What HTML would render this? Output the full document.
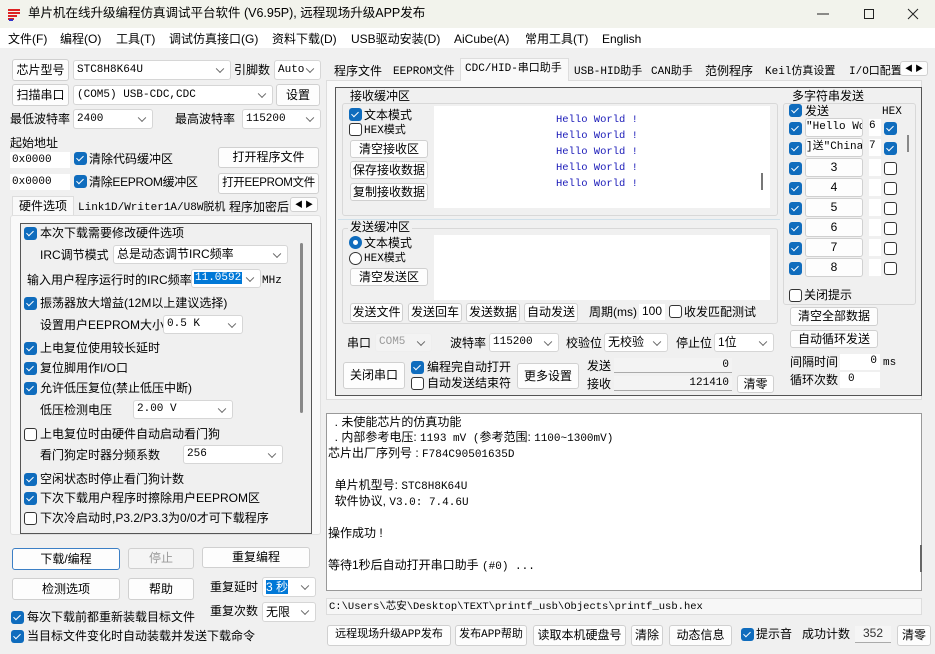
<!DOCTYPE html>
<html><head><meta charset="utf-8"><style>
*{box-sizing:border-box;margin:0;padding:0}
body{width:935px;height:654px;overflow:hidden;background:#f0f0f0;font:12px "Liberation Sans","Noto Sans CJK SC",sans-serif;color:#000;position:relative}
.a{position:absolute;white-space:nowrap;line-height:14px}
.b{position:absolute;background:#fdfdfd;border:1px solid #d0d0d0;border-radius:3px;text-align:center;white-space:nowrap;font-size:12px}
.s{position:absolute;background:#fff;border:1px solid #d6d6d6;border-radius:3px;padding-left:3px;white-space:nowrap;overflow:hidden}
.s::after{content:"";position:absolute;right:7px;top:50%;width:5px;height:5px;border-right:1px solid #666;border-bottom:1px solid #666;transform:translateY(-70%) rotate(45deg)}
.c{position:absolute;width:13px;height:13px;background:#0f6cbd;border-radius:3px}
.c::after{content:"";position:absolute;left:4px;top:2px;width:3px;height:6px;border-right:1.5px solid #fff;border-bottom:1.5px solid #fff;transform:rotate(45deg)}
.u{position:absolute;width:13px;height:13px;background:#fff;border:1px solid #333;border-radius:3px}
.m{font-family:"Liberation Mono","Noto Sans CJK SC",monospace;font-size:11px}
.w{position:absolute;background:#fff}
.g{position:absolute;border:1px solid #d8d8d8;border-radius:3px}
.l{position:absolute;left:328px;white-space:nowrap;line-height:14px}
</style></head><body>
<!-- title -->
<div style="position:absolute;left:0;top:0;width:935px;height:28px;background:#f2f3ec"></div>
<svg class="a" style="left:6px;top:6px" width="16" height="16"><path d="M2 4h12M2 7h12M2 10h9M2 13h6" stroke="#d22" stroke-width="2"/><path d="M3 14h4" stroke="#33c" stroke-width="2"/></svg>
<div class="a" style="left:28px;top:6px;font-size:12.5px">单片机在线升级编程仿真调试平台软件 (V6.95P), 远程现场升级APP发布</div>
<svg class="a" style="left:815px;top:6px" width="110" height="16"><path d="M2 8h12" stroke="#222"/><rect x="49.5" y="3.5" width="9" height="9" fill="none" stroke="#222"/><path d="M93 3l10 10M103 3l-10 10" stroke="#222"/></svg>
<!-- menu -->
<div style="position:absolute;left:0;top:28px;width:935px;height:20px;background:#fff"></div>
<div class="a" style="left:8px;top:32px">文件(F)</div><div class="a" style="left:60px;top:32px">编程(O)</div><div class="a" style="left:116px;top:32px">工具(T)</div><div class="a" style="left:169px;top:32px">调试仿真接口(G)</div><div class="a" style="left:272px;top:32px">资料下载(D)</div><div class="a" style="left:351px;top:32px">USB驱动安装(D)</div><div class="a" style="left:454px;top:32px">AiCube(A)</div><div class="a" style="left:525px;top:32px">常用工具(T)</div><div class="a" style="left:602px;top:32px">English</div>
<!-- left top -->
<div class="b" style="left:12px;top:59px;width:57px;height:22px;line-height:20px">芯片型号</div>
<div class="s m" style="left:73px;top:60px;width:158px;height:20px;line-height:18px">STC8H8K64U</div>
<div class="a" style="left:234px;top:63px">引脚数</div>
<div class="s m" style="left:274px;top:60px;width:47px;height:20px;line-height:18px">Auto</div>
<div class="b" style="left:12px;top:84px;width:57px;height:22px;line-height:20px">扫描串口</div>
<div class="s m" style="left:73px;top:85px;width:200px;height:20px;line-height:18px">(COM5) USB-CDC,CDC</div>
<div class="b" style="left:276px;top:84px;width:44px;height:22px;line-height:20px">设置</div>
<div class="a" style="left:10px;top:112px">最低波特率</div>
<div class="s m" style="left:73px;top:109px;width:80px;height:20px;line-height:18px">2400</div>
<div class="a" style="left:175px;top:112px">最高波特率</div>
<div class="s m" style="left:242px;top:109px;width:79px;height:20px;line-height:18px">115200</div>
<div class="a" style="left:10px;top:136px">起始地址</div>
<div class="w m a" style="left:10px;top:152px;width:60px;height:16px;padding-left:2px;line-height:16px">0x0000</div>
<div class="c" style="left:74px;top:152px"></div><div class="a" style="left:89px;top:152px">清除代码缓冲区</div>
<div class="b" style="left:218px;top:147px;width:101px;height:21px;line-height:19px">打开程序文件</div>
<div class="w m a" style="left:10px;top:174px;width:60px;height:16px;padding-left:2px;line-height:16px">0x0000</div>
<div class="c" style="left:74px;top:175px"></div><div class="a" style="left:89px;top:175px;letter-spacing:-0.3px">清除EEPROM缓冲区</div>
<div class="b" style="left:218px;top:173px;width:101px;height:21px;line-height:19px;font-size:11.5px;letter-spacing:-0.3px">打开EEPROM文件</div>
<!-- left tabs -->
<div style="position:absolute;left:12px;top:196px;width:62px;height:20px;background:#f9f9f9;border:1px solid #ddd;border-bottom:none"></div>
<div class="a" style="left:19px;top:199px">硬件选项</div>
<div class="a m" style="left:78px;top:201px">Link1D/Writer1A/U8W脱机</div>
<div class="a" style="left:229px;top:200px">程序加密后</div>
<div class="b" style="left:290px;top:197px;width:28px;height:15px;font-size:8px;line-height:13px">◀ ▶</div>
<div style="position:absolute;left:10px;top:215px;width:311px;height:320px;background:#f9f9f9;border:1px solid #e0e0e0;border-radius:3px"></div>
<div style="position:absolute;left:20px;top:223px;width:292px;height:311px;border:1px solid #555;background:#f0f0f0"></div>
<div style="position:absolute;left:300px;top:243px;width:3px;height:170px;background:#888;border-radius:2px"></div>
<div class="c" style="left:24px;top:227px"></div><div class="a" style="left:40px;top:226px">本次下载需要修改硬件选项</div>
<div class="a" style="left:40px;top:248px">IRC调节模式</div>
<div class="s" style="left:113px;top:245px;width:175px;height:19px;line-height:17px">总是动态调节IRC频率</div>
<div class="a" style="left:27px;top:273px">输入用户程序运行时的IRC频率</div>
<div class="s m" style="left:191px;top:269px;width:70px;height:19px;line-height:17px;padding-left:2px"><span style="background:#0078d7;color:#fff;padding:0 1px">11.0592</span></div>
<div class="a m" style="left:262px;top:274px">MHz</div>
<div class="c" style="left:24px;top:297px"></div><div class="a" style="left:40px;top:296px">振荡器放大增益(12M以上建议选择)</div>
<div class="a" style="left:40px;top:318px">设置用户EEPROM大小</div>
<div class="s m" style="left:163px;top:315px;width:80px;height:19px;line-height:17px">0.5 K</div>
<div class="c" style="left:24px;top:342px"></div><div class="a" style="left:40px;top:341px">上电复位使用较长延时</div>
<div class="c" style="left:24px;top:362px"></div><div class="a" style="left:40px;top:361px">复位脚用作I/O口</div>
<div class="c" style="left:24px;top:382px"></div><div class="a" style="left:40px;top:381px">允许低压复位(禁止低压中断)</div>
<div class="a" style="left:40px;top:403px">低压检测电压</div>
<div class="s m" style="left:133px;top:400px;width:100px;height:19px;line-height:17px">2.00 V</div>
<div class="u" style="left:24px;top:428px"></div><div class="a" style="left:40px;top:427px">上电复位时由硬件自动启动看门狗</div>
<div class="a" style="left:40px;top:448px">看门狗定时器分频系数</div>
<div class="s m" style="left:183px;top:445px;width:100px;height:19px;line-height:17px">256</div>
<div class="c" style="left:24px;top:473px"></div><div class="a" style="left:40px;top:472px">空闲状态时停止看门狗计数</div>
<div class="c" style="left:24px;top:492px"></div><div class="a" style="left:40px;top:491px">下次下载用户程序时擦除用户EEPROM区</div>
<div class="u" style="left:24px;top:512px"></div><div class="a" style="left:40px;top:511px">下次冷启动时,P3.2/P3.3为0/0才可下载程序</div>
<!-- left bottom -->
<div class="b" style="left:12px;top:548px;width:108px;height:22px;line-height:20px;border-color:#3c7fc5">下载/编程</div>
<div class="b" style="left:128px;top:548px;width:66px;height:21px;line-height:19px;color:#999;background:#f5f5f5">停止</div>
<div class="b" style="left:202px;top:547px;width:108px;height:21px;line-height:19px">重复编程</div>
<div class="b" style="left:12px;top:578px;width:108px;height:22px;line-height:20px">检测选项</div>
<div class="b" style="left:128px;top:578px;width:66px;height:22px;line-height:20px">帮助</div>
<div class="a" style="left:210px;top:580px">重复延时</div>
<div class="s" style="left:262px;top:577px;width:54px;height:20px;line-height:18px"><span style="background:#0078d7;color:#fff">3 秒</span></div>
<div class="a" style="left:210px;top:604px">重复次数</div>
<div class="s" style="left:262px;top:602px;width:54px;height:20px;line-height:18px">无限</div>
<div class="c" style="left:11px;top:611px"></div><div class="a" style="left:27px;top:610px">每次下载前都重新装载目标文件</div>
<div class="c" style="left:11px;top:630px"></div><div class="a" style="left:27px;top:629px">当目标文件变化时自动装载并发送下载命令</div>
<!-- right tabs -->
<div style="position:absolute;left:326px;top:80px;width:596px;height:320px;background:#f9f9f9;border:1px solid #ddd"></div>
<div style="position:absolute;left:460px;top:58px;width:109px;height:23px;background:#f9f9f9;border:1px solid #ddd;border-bottom:none"></div>
<div class="a" style="left:334px;top:64px">程序文件</div>
<div class="a m" style="left:393px;top:65px">EEPROM文件</div>
<div class="a m" style="left:465px;top:62px">CDC/HID-串口助手</div>
<div class="a m" style="left:574px;top:65px">USB-HID助手</div>
<div class="a m" style="left:651px;top:65px">CAN助手</div>
<div class="a" style="left:705px;top:64px">范例程序</div>
<div class="a m" style="left:765px;top:65px">Keil仿真设置</div>
<div class="a m" style="left:849px;top:65px">I/O口配置</div>
<div class="b" style="left:900px;top:61px;width:28px;height:15px;font-size:8px;line-height:13px">◀ ▶</div>
<div style="position:absolute;left:335px;top:87px;width:587px;height:309px;border:1px solid #555;background:#f0f0f0"></div>
<!-- receive -->
<div class="g" style="left:342px;top:103px;width:436px;height:113px"></div>
<div class="a" style="left:348px;top:89px;background:#f0f0f0;padding:0 2px">接收缓冲区</div>
<div class="w" style="left:434px;top:106px;width:336px;height:102px"></div>
<div style="position:absolute;left:761px;top:173px;width:2px;height:17px;background:#777"></div>
<div class="a m" style="left:556px;top:112px;color:#1a1ab8;line-height:16px;font-size:10.5px">Hello World !<br>Hello World !<br>Hello World !<br>Hello World !<br>Hello World !</div>
<div class="c" style="left:349px;top:108px"></div><div class="a" style="left:364px;top:108px">文本模式</div>
<div class="u" style="left:349px;top:123px"></div><div class="a m" style="left:364px;top:124px">HEX模式</div>
<div class="b" style="left:350px;top:140px;width:78px;height:18px;line-height:16px">清空接收区</div>
<div class="b" style="left:350px;top:161px;width:78px;height:18px;line-height:16px">保存接收数据</div>
<div class="b" style="left:350px;top:183px;width:78px;height:18px;line-height:16px">复制接收数据</div>
<div style="position:absolute;left:338px;top:219px;width:442px;height:1px;background:#cfe0ea"></div>
<!-- send -->
<div class="g" style="left:342px;top:228px;width:436px;height:96px"></div>
<div class="a" style="left:348px;top:220px;background:#f0f0f0;padding:0 2px">发送缓冲区</div>
<div class="w" style="left:434px;top:235px;width:336px;height:65px"></div>
<div style="position:absolute;left:349px;top:236px;width:13px;height:13px;border-radius:50%;background:#0f6cbd"><div style="position:absolute;left:4px;top:4px;width:5px;height:5px;border-radius:50%;background:#fff"></div></div><div class="a" style="left:364px;top:236px">文本模式</div>
<div style="position:absolute;left:349px;top:252px;width:13px;height:13px;border-radius:50%;border:1px solid #333;background:#fff"></div><div class="a m" style="left:364px;top:252px">HEX模式</div>
<div class="b" style="left:350px;top:268px;width:78px;height:18px;line-height:16px">清空发送区</div>
<div class="b" style="left:350px;top:303px;width:53px;height:19px;line-height:17px">发送文件</div>
<div class="b" style="left:408px;top:303px;width:54px;height:19px;line-height:17px">发送回车</div>
<div class="b" style="left:466px;top:303px;width:54px;height:19px;line-height:17px">发送数据</div>
<div class="b" style="left:524px;top:303px;width:54px;height:19px;line-height:17px">自动发送</div>
<div class="a" style="left:589px;top:305px">周期(ms)</div>
<div class="w a" style="left:639px;top:304px;width:26px;height:16px;text-align:center">100</div>
<div class="u" style="left:669px;top:305px"></div><div class="a" style="left:684px;top:305px">收发匹配测试</div>
<!-- serial -->
<div class="a" style="left:347px;top:336px">串口</div>
<div class="s m" style="left:375px;top:333px;width:57px;height:19px;line-height:17px;color:#999;background:#f3f3f3;border-color:#eee">COM5</div>
<div class="a" style="left:450px;top:336px">波特率</div>
<div class="s m" style="left:489px;top:333px;width:70px;height:19px;line-height:17px">115200</div>
<div class="a" style="left:566px;top:336px">校验位</div>
<div class="s" style="left:604px;top:333px;width:64px;height:19px;line-height:17px">无校验</div>
<div class="a" style="left:676px;top:336px">停止位</div>
<div class="s" style="left:714px;top:333px;width:60px;height:19px;line-height:17px">1位</div>
<div class="b" style="left:343px;top:362px;width:62px;height:27px;line-height:25px">关闭串口</div>
<div class="c" style="left:411px;top:361px"></div><div class="a" style="left:427px;top:360px">编程完自动打开</div>
<div class="u" style="left:411px;top:377px"></div><div class="a" style="left:427px;top:376px">自动发送结束符</div>
<div class="b" style="left:517px;top:363px;width:62px;height:26px;line-height:24px">更多设置</div>
<div class="a" style="left:587px;top:359px">发送</div>
<div class="a" style="left:587px;top:377px">接收</div>
<div class="a m" style="left:614px;top:358px;width:118px;height:15px;background:#f3f3f3;border-bottom:1px solid #aaa;text-align:right;padding-right:3px">0</div>
<div class="a m" style="left:614px;top:376px;width:118px;height:15px;background:#f3f3f3;border-bottom:1px solid #aaa;text-align:right;padding-right:3px">121410</div>
<div class="b" style="left:737px;top:375px;width:37px;height:18px;line-height:16px">清零</div>
<!-- multi -->
<div class="g" style="left:783px;top:103px;width:133px;height:202px"></div>
<div class="a" style="left:790px;top:89px;background:#f0f0f0;padding:0 2px">多字符串发送</div>
<div class="c" style="left:789px;top:104px"></div><div class="a" style="left:805px;top:104px">发送</div>
<div class="a m" style="left:882px;top:105px">HEX</div>
<div style="position:absolute;left:907px;top:135px;width:2px;height:17px;background:#888"></div>
<div class="c" style="left:789px;top:122px"></div><div class="b m" style="left:805px;top:118px;width:58px;height:19px;line-height:17px;text-align:left;overflow:hidden">"Hello Wor</div><div class="w a m" style="left:869px;top:119px;width:12px;height:17px">6</div><div class="c" style="left:884px;top:122px"></div>
<div class="c" style="left:789px;top:142px"></div><div class="b m" style="left:805px;top:138px;width:58px;height:19px;line-height:17px;text-align:left;overflow:hidden">]送"China!</div><div class="w a m" style="left:869px;top:139px;width:12px;height:17px">7</div><div class="c" style="left:884px;top:142px"></div>
<div class="c" style="left:789px;top:162px"></div><div class="b" style="left:805px;top:158px;width:58px;height:19px;line-height:17px">3</div><div class="w" style="left:869px;top:159px;width:12px;height:17px"></div><div class="u" style="left:884px;top:162px"></div>
<div class="c" style="left:789px;top:182px"></div><div class="b" style="left:805px;top:178px;width:58px;height:19px;line-height:17px">4</div><div class="w" style="left:869px;top:179px;width:12px;height:17px"></div><div class="u" style="left:884px;top:182px"></div>
<div class="c" style="left:789px;top:202px"></div><div class="b" style="left:805px;top:198px;width:58px;height:19px;line-height:17px">5</div><div class="w" style="left:869px;top:199px;width:12px;height:17px"></div><div class="u" style="left:884px;top:202px"></div>
<div class="c" style="left:789px;top:222px"></div><div class="b" style="left:805px;top:218px;width:58px;height:19px;line-height:17px">6</div><div class="w" style="left:869px;top:219px;width:12px;height:17px"></div><div class="u" style="left:884px;top:222px"></div>
<div class="c" style="left:789px;top:242px"></div><div class="b" style="left:805px;top:238px;width:58px;height:19px;line-height:17px">7</div><div class="w" style="left:869px;top:239px;width:12px;height:17px"></div><div class="u" style="left:884px;top:242px"></div>
<div class="c" style="left:789px;top:262px"></div><div class="b" style="left:805px;top:258px;width:58px;height:19px;line-height:17px">8</div><div class="w" style="left:869px;top:259px;width:12px;height:17px"></div><div class="u" style="left:884px;top:262px"></div>
<div class="u" style="left:789px;top:289px"></div><div class="a" style="left:804px;top:288px">关闭提示</div>
<div class="b" style="left:790px;top:307px;width:88px;height:19px;line-height:17px">清空全部数据</div>
<div class="b" style="left:790px;top:330px;width:88px;height:18px;line-height:16px">自动循环发送</div>
<div class="a" style="left:790px;top:355px">间隔时间</div><div class="w a m" style="left:840px;top:354px;width:40px;height:16px;text-align:right;padding-right:3px">0</div><div class="a m" style="left:883px;top:356px">ms</div>
<div class="a" style="left:790px;top:373px">循环次数</div><div class="w a m" style="left:840px;top:372px;width:40px;height:16px;padding-left:8px">0</div>
<!-- log -->
<div class="w" style="left:326px;top:413px;width:596px;height:178px;border:1px solid #999"></div>
<div style="position:absolute;left:920px;top:545px;width:2px;height:27px;background:#666"></div>
<div class="l" style="top:415px">&nbsp;&nbsp;. 未使能芯片的仿真功能</div>
<div class="l" style="top:430px">&nbsp;&nbsp;. 内部参考电压: <span class="m">1193 mV (</span>参考范围: <span class="m">1100~1300mV)</span></div>
<div class="l" style="top:446px">芯片出厂序列号 : <span class="m">F784C90501635D</span></div>
<div class="l" style="top:478px">&nbsp;&nbsp;单片机型号: <span class="m">STC8H8K64U</span></div>
<div class="l" style="top:494px">&nbsp;&nbsp;软件协议, <span class="m">V3.0: 7.4.6U</span></div>
<div class="l" style="top:526px">操作成功 !</div>
<div class="l" style="top:558px">等待1秒后自动打开串口助手 <span class="m">(#0) ...</span></div>
<div class="a m" style="left:326px;top:598px;width:596px;height:17px;background:#f7f7f7;border:1px solid #ddd;padding:1px 2px;font-size:10.5px">C:\Users\芯安\Desktop\TEXT\printf_usb\Objects\printf_usb.hex</div>
<!-- bottom -->
<div class="b m" style="left:327px;top:625px;width:124px;height:21px;line-height:19px">远程现场升级APP发布</div>
<div class="b m" style="left:455px;top:625px;width:72px;height:21px;line-height:19px">发布APP帮助</div>
<div class="b" style="left:533px;top:625px;width:93px;height:21px;line-height:19px">读取本机硬盘号</div>
<div class="b" style="left:631px;top:625px;width:32px;height:21px;line-height:19px">清除</div>
<div class="b" style="left:669px;top:625px;width:63px;height:21px;line-height:19px">动态信息</div>
<div class="c" style="left:741px;top:628px"></div><div class="a" style="left:756px;top:627px">提示音</div>
<div class="a" style="left:802px;top:627px">成功计数</div>
<div class="a" style="left:855px;top:626px;width:36px;height:17px;background:#f5f5f5;border-bottom:1px solid #aaa;text-align:center;color:#333">352</div>
<div class="b" style="left:897px;top:625px;width:34px;height:21px;line-height:19px">清零</div>
</body></html>
